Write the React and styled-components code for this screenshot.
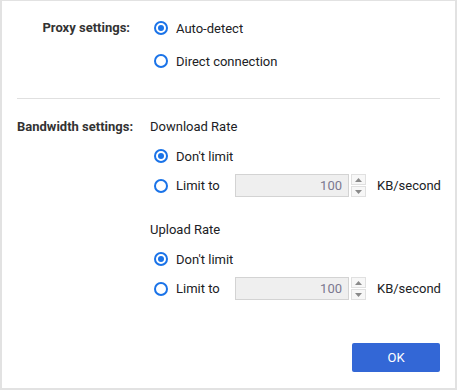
import React from 'react';
import styled, { createGlobalStyle } from 'styled-components';

const GlobalStyle = createGlobalStyle`
  html, body {
    margin: 0;
    padding: 0;
    background: #ffffff;
  }
  body {
    font-family: Roboto, "Liberation Sans", Arial, sans-serif;
    font-size: 13px;
    color: #202124;
  }
`;

const Dialog = styled.div`
  width: 457px;
  height: 390px;
  box-sizing: border-box;
  border: 2px solid #e2e2e2;
  border-top-width: 1px;
  padding: 16px 15px 0 15px;
  display: flex;
  flex-direction: column;
  background: #fff;
`;

const Section = styled.div`
  display: grid;
  grid-template-columns: 113px 1fr;
  column-gap: 20px;
  align-items: start;
`;

const SectionLabel = styled.div`
  text-align: right;
  font-weight: bold;
  color: #333;
  height: 22px;
  line-height: 22px;
  white-space: nowrap;
`;

const Options = styled.div`
  display: flex;
  flex-direction: column;
  gap: ${(p) => p.$gap || 7}px;
`;

const Divider = styled.hr`
  border: none;
  border-top: 1px solid #e0e0e0;
  margin: 26px 0 17px 0;
  height: 0;
`;

const Heading = styled.div`
  height: 22px;
  line-height: 22px;
  margin-top: ${(p) => p.$top || 0}px;
  color: #202124;
`;

const Row = styled.label`
  display: flex;
  align-items: center;
  height: ${(p) => p.$h || 22}px;
`;

const RadioLabel = styled.span`
  display: flex;
  align-items: center;
  width: ${(p) => (p.$w ? `${p.$w}px` : 'auto')};
  white-space: nowrap;
`;

const Radio = styled.span`
  width: 14px;
  height: 14px;
  box-sizing: border-box;
  border: 2px solid #1a73e8;
  border-radius: 50%;
  margin-left: 4px;
  margin-right: 8px;
  display: flex;
  align-items: center;
  justify-content: center;
  flex-shrink: 0;

  &::after {
    content: '';
    width: 6px;
    height: 6px;
    border-radius: 50%;
    background: ${(p) => (p.$checked ? '#1a73e8' : 'transparent')};
  }
`;

const NumberBox = styled.div`
  width: 114px;
  height: 23px;
  box-sizing: border-box;
  border: 1px solid #d3d3d3;
  background: #efefef;
  color: #7b7890;
  text-align: right;
  padding-right: 6px;
  line-height: 21px;
`;

const Spinner = styled.div`
  display: flex;
  flex-direction: column;
  gap: 1px;
  margin-left: 2px;
  height: 23px;
`;

const SpinButton = styled.div`
  width: 15px;
  height: 11px;
  box-sizing: border-box;
  border: 1px solid #e0e0e0;
  background: #f7f7f7;
  display: flex;
  align-items: center;
  justify-content: center;
`;

const Unit = styled.span`
  margin-left: 11px;
`;

const Footer = styled.div`
  margin-top: auto;
  margin-bottom: 16px;
  display: flex;
  justify-content: flex-end;
`;

const OkButton = styled.button`
  width: 88px;
  height: 29px;
  border: none;
  border-radius: 2px;
  background: #3367d6;
  color: #fff;
  font-family: Roboto, "Liberation Sans", Arial, sans-serif;
  font-size: 13px;
  cursor: pointer;
`;

function Arrow({ up }) {
  return (
    <svg width="7" height="4" viewBox="0 0 7 4">
      <polygon points={up ? '0,4 7,4 3.5,0' : '0,0 7,0 3.5,4'} fill="#8a8a8a" />
    </svg>
  );
}

function Option({ checked, children, width, h }) {
  return (
    <Row $h={h}>
      <RadioLabel $w={width}>
        <Radio $checked={checked} />
        {children}
      </RadioLabel>
    </Row>
  );
}

function RateGroup({ title, top }) {
  return (
    <>
      <Heading $top={top}>{title}</Heading>
      <Options style={{ marginTop: 7 }}>
        <Option checked>Don't limit</Option>
        <Row $h={23}>
          <RadioLabel $w={85}>
            <Radio />
            Limit to
          </RadioLabel>
          <NumberBox>100</NumberBox>
          <Spinner>
            <SpinButton><Arrow up /></SpinButton>
            <SpinButton><Arrow /></SpinButton>
          </Spinner>
          <Unit>KB/second</Unit>
        </Row>
      </Options>
    </>
  );
}

export default function App() {
  return (
    <>
      <GlobalStyle />
      <Dialog>
        <Section>
          <SectionLabel>Proxy settings:</SectionLabel>
          <Options $gap={11}>
            <Option checked>Auto-detect</Option>
            <Option>Direct connection</Option>
          </Options>
        </Section>
        <Divider />
        <Section>
          <SectionLabel>Bandwidth settings:</SectionLabel>
          <div>
            <RateGroup title="Download Rate" />
            <RateGroup title="Upload Rate" top={22} />
          </div>
        </Section>
        <Footer>
          <OkButton>OK</OkButton>
        </Footer>
      </Dialog>
    </>
  );
}
